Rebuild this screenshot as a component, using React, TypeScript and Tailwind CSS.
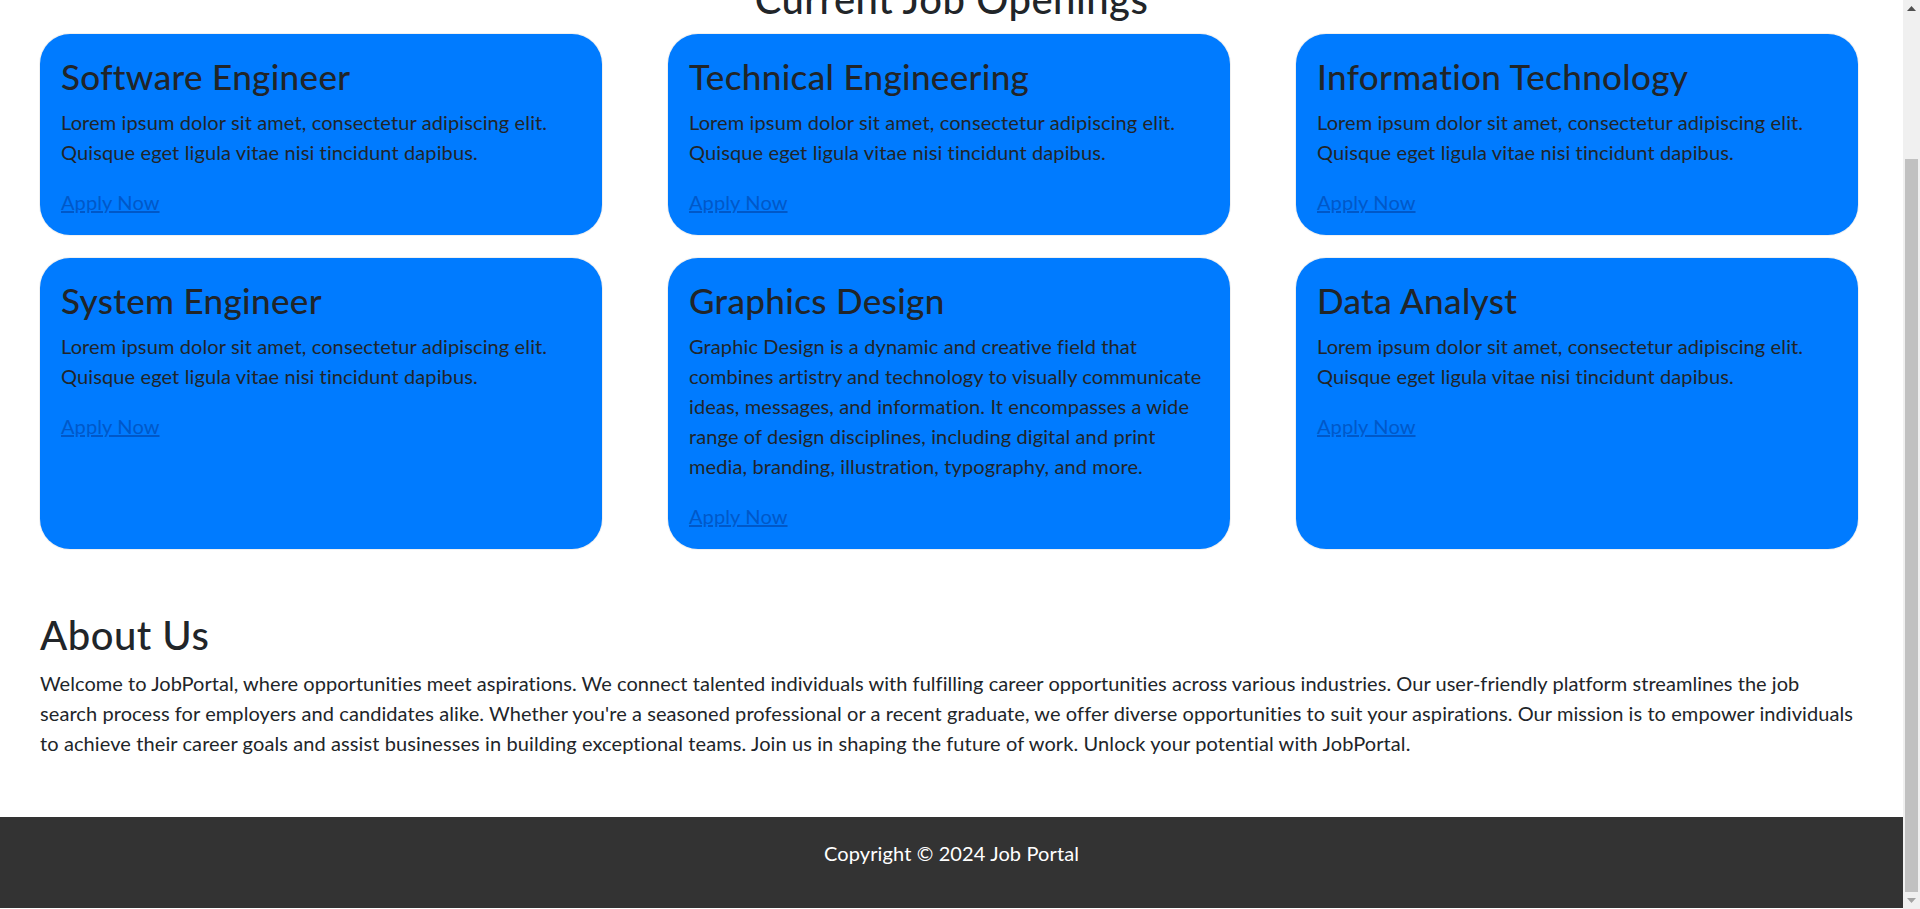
import React from "react";

interface Job {
  title: string;
  description: string;
}

const lorem = "Lorem ipsum dolor sit amet, consectetur adipiscing elit. Quisque eget ligula vitae nisi tincidunt dapibus.";

const jobs: Job[] = [
  { title: "Software Engineer", description: lorem },
  { title: "Technical Engineering", description: lorem },
  { title: "Information Technology", description: lorem },
  { title: "System Engineer", description: lorem },
  {
    title: "Graphics Design",
    description:
      "Graphic Design is a dynamic and creative field that combines artistry and technology to visually communicate ideas, messages, and information. It encompasses a wide range of design disciplines, including digital and print media, branding, illustration, typography, and more.",
  },
  { title: "Data Analyst", description: lorem },
];

const JobCard: React.FC<{ job: Job }> = ({ job }) => (
  <div className="rounded-[30px] bg-[#007bff] px-[21px] pt-[21px] pb-[18px] shadow-[0_0_0_1px_rgba(0,0,0,0.06)]">
    <h3 className="mb-[10px] text-[35px] leading-[42px] font-medium tracking-[0.35px] text-[#212529]">
      {job.title}
    </h3>
    <p className="mb-5 text-[20px] leading-[30px] tracking-[0.12px] text-[#212529]">{job.description}</p>
    <a href="#" className="text-[20px] leading-[30px] tracking-[0.12px] text-[#0058c8] underline">
      Apply Now
    </a>
  </div>
);

const Scrollbar: React.FC = () => (
  <div className="flex w-[17px] flex-col bg-[#f0f0f0]">
    <div className="flex h-[17px] items-center justify-center">
      <svg width="9" height="5" viewBox="0 0 9 5">
        <polygon points="0,5 4.5,0 9,5" fill="#505050" />
      </svg>
    </div>
    <div className="flex flex-1 flex-col">
      <div className="h-[142px]" />
      <div className="mx-[2px] flex-1 bg-[#c1c1c1]" />
    </div>
    <div className="flex h-[17px] items-center justify-center">
      <svg width="9" height="5" viewBox="0 0 9 5">
        <polygon points="0,0 9,0 4.5,5" fill="#a3a3a3" />
      </svg>
    </div>
  </div>
);

export default function App() {
  return (
    <div className="flex h-[909px] overflow-hidden bg-white font-['Lato',sans-serif] text-[#212529]">
      <main className="flex min-w-0 flex-1 flex-col">
        <h2 className="mt-[-25px] mb-[11px] text-center text-[40px] leading-[48px] font-medium tracking-[0.5px]">
          Current Job Openings
        </h2>

        <section className="grid grid-cols-3 gap-x-[66px] gap-y-[23px] pr-[45px] pl-[40px]">
          {jobs.map((job) => (
            <JobCard key={job.title} job={job} />
          ))}
        </section>

        <section className="mt-[62px] pr-[45px] pl-[40px]">
          <h2 className="mb-[9px] text-[40px] leading-[48px] font-medium tracking-[0.5px]">About Us</h2>
          <p className="text-[20px] leading-[30px] whitespace-nowrap">
            <span className="tracking-[0.04px]">
              Welcome to JobPortal, where opportunities meet aspirations. We connect talented individuals with
              fulfilling career opportunities across various industries. Our user-friendly platform streamlines the
              job
            </span>
            <br />
            <span className="tracking-[0.08px]">
              search process for employers and candidates alike. Whether you're a seasoned professional or a recent
              graduate, we offer diverse opportunities to suit your aspirations. Our mission is to empower
              individuals
            </span>
            <br />
            <span className="tracking-[0.1px]">
              to achieve their career goals and assist businesses in building exceptional teams. Join us in shaping
              the future of work. Unlock your potential with JobPortal.
            </span>
          </p>
        </section>

        <footer className="mt-[59px] h-[91px] bg-[#333333] pt-[21px] text-center">
          <p className="text-[20px] leading-[30px] tracking-[0.12px] text-white">Copyright © 2024 Job Portal</p>
        </footer>
      </main>
      <Scrollbar />
    </div>
  );
}
